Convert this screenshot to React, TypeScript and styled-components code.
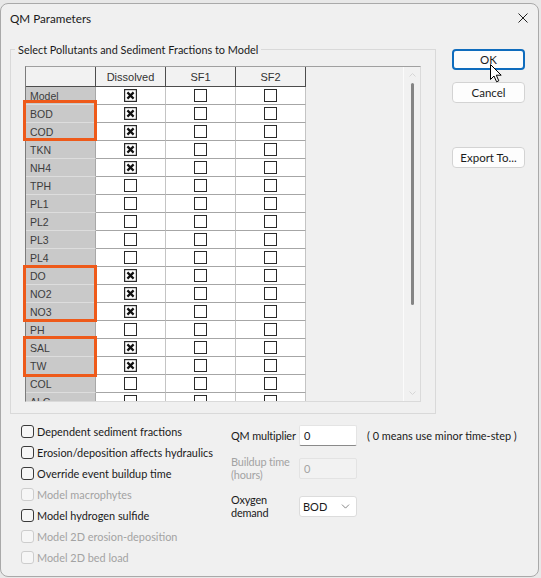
import React from 'react';
import styled, { createGlobalStyle } from 'styled-components';
import { ChevronDown } from 'lucide-react';

const ui = `Lato, "Noto Sans", sans-serif`;
const gridFont = `"Liberation Sans", Arial, sans-serif`;

const GlobalStyle = createGlobalStyle`
  html, body {
    margin: 0;
    padding: 0;
  }
  body {
    width: 541px;
    height: 578px;
    overflow: hidden;
    background: #e8e8e8;
    font-family: ${ui};
  }
`;

const pollutants: { name: string; on: boolean }[] = [
  { name: 'Model', on: true },
  { name: 'BOD', on: true },
  { name: 'COD', on: true },
  { name: 'TKN', on: true },
  { name: 'NH4', on: true },
  { name: 'TPH', on: false },
  { name: 'PL1', on: false },
  { name: 'PL2', on: false },
  { name: 'PL3', on: false },
  { name: 'PL4', on: false },
  { name: 'DO', on: true },
  { name: 'NO2', on: true },
  { name: 'NO3', on: true },
  { name: 'PH', on: false },
  { name: 'SAL', on: true },
  { name: 'TW', on: true },
  { name: 'COL', on: false },
  { name: 'ALC', on: false },
];

// hand drawn annotation boxes over the row headers
const marks = [
  { top: 33, height: 41 },
  { top: 198, height: 57 },
  { top: 269, height: 41 },
];

const options = [
  { label: 'Dependent sediment fractions', disabled: false },
  { label: 'Erosion/deposition affects hydraulics', disabled: false },
  { label: 'Override event buildup time', disabled: false },
  { label: 'Model macrophytes', disabled: true },
  { label: 'Model hydrogen sulfide', disabled: false },
  { label: 'Model 2D erosion-deposition', disabled: true },
  { label: 'Model 2D bed load', disabled: true },
];

const GridCheck = ({ on }: { on: boolean }) => (
  <svg width="13" height="13" viewBox="0 0 13 13">
    <rect x="0.5" y="0.5" width="12" height="12" fill="#fff" stroke="#2a2a2a" strokeWidth={on ? 1.4 : 1} />
    {on && <path d="M3.4 3.4 L9.6 9.6 M9.6 3.4 L3.4 9.6" stroke="#111" strokeWidth="2.2" />}
  </svg>
);

export default function App() {
  return (
    <>
      <GlobalStyle />
      <Dialog>
        <TitleBar>
          <Title>QM Parameters</Title>
          <svg width="10" height="10" viewBox="0 0 10 10">
            <path d="M0.5 0.5 L9.5 9.5 M9.5 0.5 L0.5 9.5" stroke="#222" strokeWidth="1" />
          </svg>
        </TitleBar>

        <Body>
          <Group>
            <GroupLabel>Select Pollutants and Sediment Fractions to Model</GroupLabel>
            <GridBox>
              <TableArea>
                <HeadRow>
                  <HeadCell />
                  <HeadCell>Dissolved</HeadCell>
                  <HeadCell>SF1</HeadCell>
                  <HeadCell>SF2</HeadCell>
                </HeadRow>
                {pollutants.map(p => (
                  <Row key={p.name}>
                    <RowHead>{p.name}</RowHead>
                    <Cell><GridCheck on={p.on} /></Cell>
                    <Cell><GridCheck on={false} /></Cell>
                    <Cell><GridCheck on={false} /></Cell>
                  </Row>
                ))}
              </TableArea>
              <ScrollBar>
                <ScrollArrow>
                  <svg width="7" height="4" viewBox="0 0 7 4"><path d="M0.5 3.5 L3.5 0.5 L6.5 3.5" stroke="#d6d6d6" fill="none" /></svg>
                </ScrollArrow>
                <Track>
                  <Thumb $height={222} />
                </Track>
                <ScrollArrow>
                  <svg width="7" height="4" viewBox="0 0 7 4"><path d="M0.5 0.5 L3.5 3.5 L6.5 0.5" stroke="#d6d6d6" fill="none" /></svg>
                </ScrollArrow>
              </ScrollBar>
              {marks.map(m => (
                <Mark key={m.top} $top={m.top} $height={m.height} />
              ))}
            </GridBox>
          </Group>

          <Buttons>
            <OkWrap>
              <Button $primary>OK</Button>
              <Cursor width="12" height="19" viewBox="0 0 12 19">
                <path d="M0.5 0.5 L0.5 15.5 L4 12 L6.6 17.8 L8.8 16.8 L6.3 11.2 L11.2 11.2 Z" fill="#fff" stroke="#000" strokeWidth="1" strokeLinejoin="round" />
              </Cursor>
            </OkWrap>
            <Button $gap={12}>Cancel</Button>
            <Button $gap={44}>Export To...</Button>
          </Buttons>

          <Options>
            <CheckList>
              {options.map(o => (
                <CheckRow key={o.label} $disabled={o.disabled}>
                  <Box $disabled={o.disabled} />
                  {o.label}
                </CheckRow>
              ))}
            </CheckList>
            <Fields>
              <FieldRow $gap={4}>
                <FieldLabel>QM multiplier</FieldLabel>
                <Input>0</Input>
                <Hint>( 0 means use minor time-step )</Hint>
              </FieldRow>
              <FieldRow $gap={9}>
                <FieldLabel $disabled>Buildup time<br />(hours)</FieldLabel>
                <Input $disabled>0</Input>
              </FieldRow>
              <FieldRow $gap={12}>
                <FieldLabel>Oxygen<br />demand</FieldLabel>
                <Select>
                  BOD
                  <ChevronDown size={13} strokeWidth={1.3} color="#555" />
                </Select>
              </FieldRow>
            </Fields>
          </Options>
        </Body>
      </Dialog>
    </>
  );
}

const Dialog = styled.div`
  margin-top: 3px;
  width: 539px;
  height: 574px;
  box-sizing: border-box;
  background: #f0f0f0;
  border: 1px solid #a9a9a9;
  border-radius: 8px;
  display: flex;
  flex-direction: column;
  overflow: hidden;
`;

const TitleBar = styled.div`
  height: 27px;
  display: flex;
  align-items: center;
  justify-content: space-between;
  padding: 0 10px 0 9px;
`;

const Title = styled.div`
  font: 11.7px ${ui};
  color: #1a1a1a;
`;

const Body = styled.div`
  display: grid;
  grid-template-columns: 426px 73px;
  column-gap: 16px;
  padding: 11px 0 0 9px;
`;

const Group = styled.fieldset`
  margin: 0;
  padding: 9px 14px 11px 14px;
  border: 1px solid #d9d9d9;
  min-width: 0;
`;

const GroupLabel = styled.legend`
  margin-left: -10px;
  padding: 0 3px;
  font: 10.9px/15px ${ui};
  color: #1a1a1a;
`;

const GridBox = styled.div`
  position: relative;
  display: flex;
  height: 336px;
  box-sizing: border-box;
  background: #f0f0f0;
  border-top: 1px solid #a0a0a0;
  border-left: 1px solid #7c7c7c;
  border-right: 1px solid #dadada;
  border-bottom: 1px solid #dadada;
`;

const TableArea = styled.div`
  flex: 1;
  overflow: hidden;
  font-family: ${gridFont};
`;

const HeadRow = styled.div`
  display: flex;
  height: 20px;
`;

const HeadCell = styled.div`
  width: 70px;
  box-sizing: border-box;
  display: flex;
  align-items: center;
  justify-content: center;
  background: #f2f2f2;
  border-right: 1px solid #4d4d4d;
  border-bottom: 1px solid #4d4d4d;
  font-size: 11px;
  color: #333;
`;

const Row = styled.div`
  display: flex;
  height: 18px;
`;

const RowHead = styled.div`
  width: 70px;
  box-sizing: border-box;
  display: flex;
  align-items: center;
  padding-left: 4px;
  background: #c9c9c9;
  border-right: 1px solid #a8a8a8;
  border-bottom: 1px solid #dddddd;
  font-size: 10.5px;
  color: #3c3c3c;
`;

const Cell = styled.div`
  width: 70px;
  box-sizing: border-box;
  display: flex;
  align-items: center;
  justify-content: center;
  background: #fff;
  border-right: 1px solid #c4c4c4;
  border-bottom: 1px solid #a6a6a6;
`;

const ScrollBar = styled.div`
  width: 17px;
  box-sizing: border-box;
  display: flex;
  flex-direction: column;
  background: #f1f1f1;
  border-left: 1px solid #fbfbfb;
`;

const ScrollArrow = styled.div`
  height: 16px;
  display: flex;
  align-items: center;
  justify-content: center;
`;

const Track = styled.div`
  flex: 1;
  display: flex;
  justify-content: center;
  padding-left: 1px;
`;

const Thumb = styled.div<{ $height: number }>`
  width: 3px;
  height: ${p => p.$height}px;
  border-radius: 2px;
  background: #858585;
`;

const Mark = styled.div<{ $top: number; $height: number }>`
  position: absolute;
  left: -3px;
  top: ${p => p.$top}px;
  width: 74px;
  height: ${p => p.$height}px;
  box-sizing: border-box;
  border: 3px solid #ee5a1a;
`;

const Buttons = styled.div`
  display: flex;
  flex-direction: column;
  padding-top: 7px;
`;

const OkWrap = styled.div`
  position: relative;
`;

const Cursor = styled.svg`
  position: absolute;
  left: 38px;
  top: 15px;
`;

const Button = styled.div<{ $primary?: boolean; $gap?: number }>`
  height: 21px;
  margin-top: ${p => p.$gap ?? 0}px;
  box-sizing: border-box;
  display: flex;
  align-items: center;
  justify-content: center;
  background: #fdfdfd;
  border: ${p => (p.$primary ? '2px solid #0f6cbd' : '1px solid #d3d3d3')};
  border-radius: 4px;
  font: 11.5px ${ui};
  color: #1b1b1b;
`;

const Options = styled.div`
  grid-column: 1 / -1;
  display: grid;
  grid-template-columns: 210px 1fr;
  padding: 7px 0 0 11px;
`;

const CheckList = styled.div`
  display: flex;
  flex-direction: column;
`;

const CheckRow = styled.div<{ $disabled?: boolean }>`
  height: 21px;
  display: flex;
  align-items: center;
  gap: 3px;
  white-space: nowrap;
  font: 10.9px ${ui};
  color: ${p => (p.$disabled ? '#a3a3a3' : '#1a1a1a')};
`;

const Box = styled.div<{ $disabled?: boolean }>`
  flex-shrink: 0;
  width: 13px;
  height: 13px;
  box-sizing: border-box;
  border-radius: 3px;
  border: 1px solid ${p => (p.$disabled ? '#cdcdcd' : '#3a3a3a')};
  background: #f6f6f6;
`;

const Fields = styled.div`
  display: flex;
  flex-direction: column;
`;

const FieldRow = styled.div<{ $gap: number }>`
  display: flex;
  align-items: center;
  margin-top: ${p => p.$gap}px;
`;

const FieldLabel = styled.div<{ $disabled?: boolean }>`
  flex-shrink: 0;
  width: 68px;
  font: 10.9px/13px ${ui};
  letter-spacing: -0.15px;
  color: ${p => (p.$disabled ? '#a3a3a3' : '#1a1a1a')};
  white-space: nowrap;
`;

const Input = styled.div<{ $disabled?: boolean }>`
  flex-shrink: 0;
  width: 58px;
  height: 21px;
  box-sizing: border-box;
  display: flex;
  align-items: center;
  padding-left: 4px;
  border-radius: 2px;
  background: ${p => (p.$disabled ? '#f2f2f2' : '#fff')};
  border: 1px solid ${p => (p.$disabled ? '#e3e3e3' : '#e4e4e4')};
  border-bottom-color: ${p => (p.$disabled ? '#e3e3e3' : '#8a8a8a')};
  font: 11px ${ui};
  color: ${p => (p.$disabled ? '#a3a3a3' : '#1a1a1a')};
`;

const Hint = styled.div`
  margin-left: 10px;
  font: 10.9px ${ui};
  color: #1a1a1a;
  white-space: nowrap;
`;

const Select = styled.div`
  flex-shrink: 0;
  width: 58px;
  height: 21px;
  box-sizing: border-box;
  display: flex;
  align-items: center;
  justify-content: space-between;
  padding: 0 4px 0 3px;
  background: #fff;
  border: 1px solid #dcdcdc;
  border-radius: 3px;
  font: 11px ${ui};
  color: #1a1a1a;
`;
